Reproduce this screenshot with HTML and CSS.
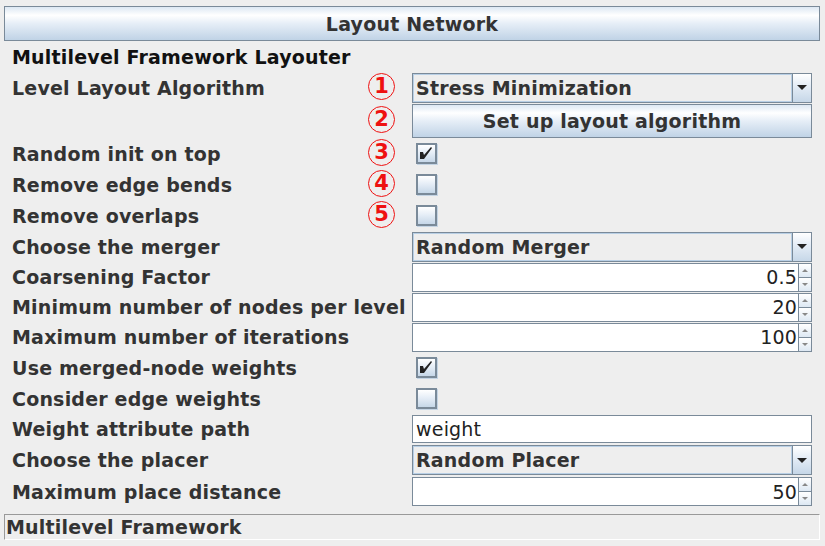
FILE: index.html
```html
<!DOCTYPE html>
<html>
<head>
<meta charset="utf-8">
<link rel="stylesheet" href="styles.css">
</head>
<body>
<div class="panel">
  <div class="header">Layout Network</div>
  <div class="form">
    <div class="row r31"><div class="title">Multilevel Framework Layouter</div></div>

    <div class="row r31">
      <div class="label">Level Layout Algorithm<span class="mark">1</span></div>
      <div class="combo h30"><div class="field">Stress Minimization</div><div class="arrow"><i></i></div></div>
    </div>

    <div class="row r35">
      <div class="label"><span class="mark">2</span></div>
      <div class="button">Set up layout algorithm</div>
    </div>

    <div class="row r31">
      <div class="label">Random init on top<span class="mark">3</span></div>
      <div class="ctl"><div class="check on"><svg viewBox="0 0 17 17" width="17" height="17"><polygon points="2,7 5,7 6,10 13,2 14,3 6,14 2,14" fill="#222"/></svg></div></div>
    </div>
    <div class="row r31">
      <div class="label">Remove edge bends<span class="mark">4</span></div>
      <div class="ctl"><div class="check"></div></div>
    </div>
    <div class="row r31">
      <div class="label">Remove overlaps<span class="mark">5</span></div>
      <div class="ctl"><div class="check"></div></div>
    </div>

    <div class="row r31">
      <div class="label">Choose the merger</div>
      <div class="combo h30"><div class="field">Random Merger</div><div class="arrow"><i></i></div></div>
    </div>

    <div class="row r30">
      <div class="label">Coarsening Factor</div>
      <div class="spinner h29"><div class="sval">0.5</div><div class="spin"><b><i class="up"></i></b><b><i class="dn"></i></b></div></div>
    </div>
    <div class="row r30">
      <div class="label">Minimum number of nodes per level</div>
      <div class="spinner h29"><div class="sval">20</div><div class="spin"><b><i class="up"></i></b><b><i class="dn"></i></b></div></div>
    </div>
    <div class="row r30">
      <div class="label">Maximum number of iterations</div>
      <div class="spinner h29"><div class="sval">100</div><div class="spin"><b><i class="up"></i></b><b><i class="dn"></i></b></div></div>
    </div>

    <div class="row r31">
      <div class="label">Use merged-node weights</div>
      <div class="ctl"><div class="check on"><svg viewBox="0 0 17 17" width="17" height="17"><polygon points="2,7 5,7 6,10 13,2 14,3 6,14 2,14" fill="#222"/></svg></div></div>
    </div>
    <div class="row r31">
      <div class="label">Consider edge weights</div>
      <div class="ctl"><div class="check"></div></div>
    </div>

    <div class="row r30">
      <div class="label">Weight attribute path</div>
      <div class="text h28">weight</div>
    </div>

    <div class="row r32">
      <div class="label">Choose the placer</div>
      <div class="combo h30"><div class="field">Random Placer</div><div class="arrow"><i></i></div></div>
    </div>

    <div class="row r31">
      <div class="label">Maximum place distance</div>
      <div class="spinner h29"><div class="sval">50</div><div class="spin"><b><i class="up"></i></b><b><i class="dn"></i></b></div></div>
    </div>
  </div>
  <div class="status">Multilevel Framework</div>
</div>
</body>
</html>
```
FILE: styles.css
```css
html, body {
  margin: 0;
  padding: 0;
  background: #eeeeee;
}
body {
  width: 825px;
  height: 546px;
  overflow: hidden;
  font-family: "DejaVu Sans", "Liberation Sans", sans-serif;
  font-weight: bold;
  font-size: 19px;
  letter-spacing: 0.2px;
  color: #333333;
}
.panel {
  padding: 6px 5px 0 4px;
}
.header {
  height: 33px;
  border: 1px solid #7a8a99;
  background: linear-gradient(to bottom, #dde8f3 0%, #ffffff 25%, #e6eef7 50%, #c0d3e6 100%);
  display: flex;
  align-items: center;
  justify-content: center;
  color: #333;
}
.form {
  padding-left: 8px;
  padding-right: 8px;
  display: flex;
  flex-direction: column;
}
.row {
  display: flex;
  align-items: center;
}
.r30 { height: 30px; }
.r31 { height: 31px; }
.r32 { height: 32px; }
.r35 { height: 35px; }
.title {
  color: #111;
}
.label {
  flex: 1;
  display: flex;
  align-items: center;
  white-space: nowrap;
}
.mark {
  margin-left: auto;
  margin-right: 17px;
  width: 25px;
  height: 25px;
  border: 1.5px solid #ee1111;
  border-radius: 50%;
  color: #ee1111;
  font-weight: bold;
  font-size: 21px;
  letter-spacing: 0;
  display: flex;
  align-items: center;
  justify-content: center;
  line-height: 1;
  position: relative;
  top: -1px;
}
.ctl {
  width: 400px;
  display: flex;
  align-items: center;
  padding-left: 4px;
  box-sizing: border-box;
}
.h28 { height: 28px; }
.h29 { height: 29px; }
.h30 { height: 30px; }
.combo {
  width: 400px;
  box-sizing: border-box;
  border: 1px solid #7a8a99;
  display: flex;
  background: #eeeeee;
}
.combo .field {
  flex: 1;
  border: 1px solid #b8cfe5;
  display: flex;
  align-items: center;
  padding-left: 2px;
  color: #333;
}
.combo .arrow {
  width: 18px;
  border-left: 1px solid #7a8a99;
  background: linear-gradient(to bottom, #ffffff 0%, #e6eef7 40%, #c6d7e8 100%);
  display: flex;
  align-items: center;
  justify-content: center;
}
.combo .arrow i {
  width: 0;
  height: 0;
  border-left: 5px solid transparent;
  border-right: 5px solid transparent;
  border-top: 5px solid #222;
}
.button {
  width: 400px;
  height: 34px;
  box-sizing: border-box;
  border: 1px solid #7a8a99;
  background: linear-gradient(to bottom, #dde8f3 0%, #ffffff 25%, #e6eef7 50%, #c0d3e6 100%);
  display: flex;
  align-items: center;
  justify-content: center;
  color: #333;
}
.check {
  width: 21px;
  height: 21px;
  box-sizing: border-box;
  border: 2px solid #7a8a99;
  background: linear-gradient(to bottom, #ffffff 0%, #e6eef7 45%, #c6d7e8 100%);
  box-shadow: 1px 1px 0 #c4d4e4;
  display: flex;
  align-items: center;
  justify-content: center;
}
.check svg { display: block; }
.spinner {
  width: 400px;
  box-sizing: border-box;
  display: flex;
  border-top: 1px solid #7a8a99;
  border-left: 1px solid #7a8a99;
}
.sval {
  flex: 1;
  background: #ffffff;
  border-bottom: 1px solid #7a8a99;
  display: flex;
  align-items: center;
  justify-content: flex-end;
  padding-right: 1px;
  font-weight: normal;
  color: #222;
}
.spin {
  width: 14px;
  display: flex;
  flex-direction: column;
}
.spin b {
  flex: 1;
  border: 1px solid #7a8a99;
  border-top: none;
  background: linear-gradient(to bottom, #ffffff 0%, #dde8f3 100%);
  display: flex;
  align-items: center;
  justify-content: center;
}
.spin i.up {
  width: 0; height: 0;
  border-left: 3px solid transparent;
  border-right: 3px solid transparent;
  border-bottom: 3px solid #888;
}
.spin i.dn {
  width: 0; height: 0;
  border-left: 3px solid transparent;
  border-right: 3px solid transparent;
  border-top: 3px solid #888;
}
.text {
  width: 400px;
  box-sizing: border-box;
  border: 1px solid #7a8a99;
  background: #ffffff;
  display: flex;
  align-items: center;
  padding-left: 3px;
  font-weight: normal;
  color: #222;
}
.status {
  margin-top: 7px;
  height: 26px;
  box-sizing: border-box;
  border-top: 1px solid #999999;
  border-left: 1px solid #999999;
  border-bottom: 1px solid #ffffff;
  border-right: 1px solid #ffffff;
  display: flex;
  align-items: center;
  padding-left: 1px;
  color: #333;
}
```
